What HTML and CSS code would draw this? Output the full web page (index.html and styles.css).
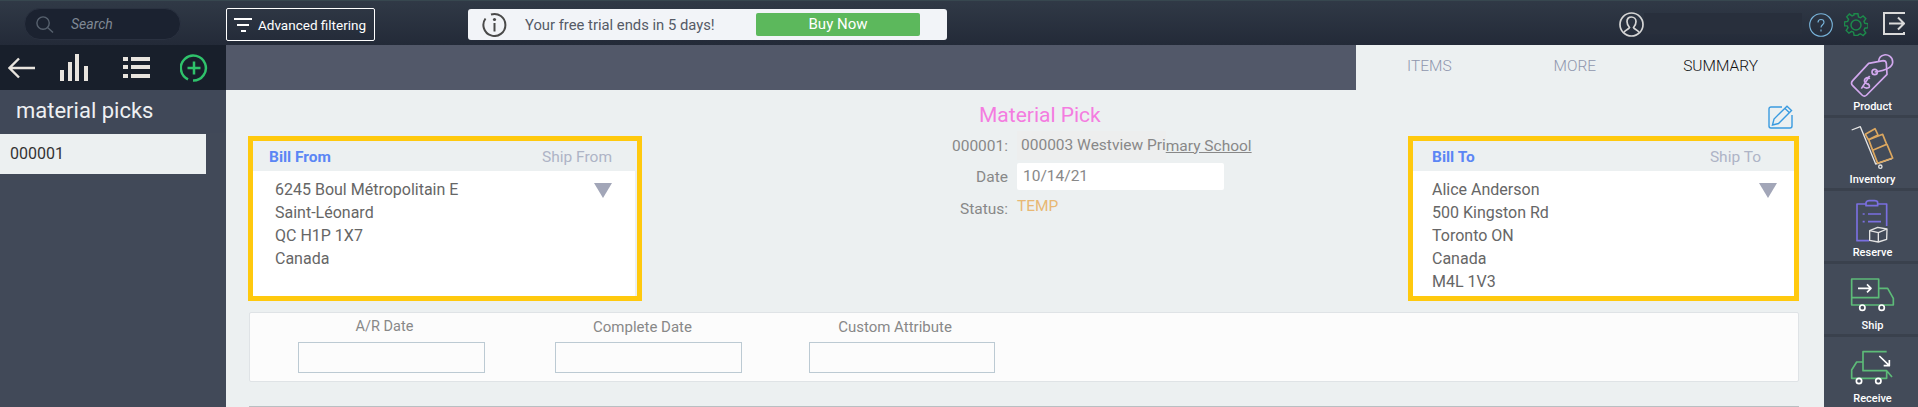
FILE: index.html
```html
<!DOCTYPE html>
<html lang="en">
  <head>
    <meta charset="UTF-8" />
    <title>Material Pick</title>
    <link rel="stylesheet" href="styles.css">
  </head>
  <body>
    <header class="topbar">
      <div class="search">
        <svg class="search-icon" viewBox="0 0 20 20"><circle cx="8.5" cy="8.5" r="6.5"/><path d="M13.5 13.5 L19 18.5"/></svg>
        <span>Search</span>
      </div>
      <button type="button" class="filter-button">
        <svg class="filter-icon" viewBox="0 0 18 16"><path d="M0 1h18v2H0zM3 7h12v2H3zM7 13h5v2H7z"/></svg>
        Advanced filtering
      </button>
      <div class="trial">
        <svg class="info-icon" viewBox="0 0 25 25"><path d="M9 2.500 A11 11 0 1 1 3.500 6.500"/><circle cx="12.500" cy="7.500" r="1.600" class="dot"/><path d="M12.500 11v8.500"/></svg>
        <span class="trial-text">Your free trial ends in 5 days!</span>
        <span class="buy-now">Buy Now</span>
      </div>
      <div class="top-right">
        <svg class="user-icon" viewBox="0 0 25 25"><circle cx="12.500" cy="12.500" r="11.500"/><path d="M5 20.500c1-3 5-3 5.500-5-2-2-2.500-4-2.500-6 0-3 2-4.500 4.500-4.500S17 7 17 9.500c0 2-.5 4-2.500 6 .5 2 4.500 2 5.500 5"/></svg>
        <div class="user-name"></div>
        <svg class="help-icon" viewBox="0 0 24 24"><circle cx="12" cy="12" r="11.300"/><path d="M9 9.500c0-2 1.300-3 3-3s3 1 3 2.800c0 2.500-3 2.500-3 5.200"/><path d="M12 16.500v2"/></svg>
        <svg class="gear-icon" viewBox="0 0 24 24"><path d="M10 1h4l.6 3.300 2 .9 2.800-1.900 2.800 2.800-1.900 2.800.9 2 3.300.6v4l-3.300.6-.9 2 1.900 2.800-2.800 2.800-2.800-1.900-2 .9L14 23.500h-4l-.6-3.300-2-.9-2.800 1.900-2.800-2.800 1.900-2.800-.9-2L0 13.500v-4l3.300-.6.9-2L2.300 4.100 5.100 1.300l2.800 1.900 2-.9z" transform="translate(.5 -.2) scale(.96)"/><circle cx="12" cy="12" r="5"/></svg>
        <svg class="logout-icon" viewBox="0 0 22 23"><path d="M21 2V1H1v21h20v-2"/><path d="M6 11.500h15M15 5.500l6 6-6 6"/></svg>
      </div>
    </header>

    <div class="app">
      <aside class="sidebar">
        <div class="toolbar">
          <svg class="tool-back" viewBox="0 0 27 22"><path d="M27 11H2M11 1.500 1.500 11l9.500 9.500"/></svg>
          <svg class="tool-bars" viewBox="0 0 28 27"><path d="M0 16h4v11H0zM8 8h4v19H8zM15 0h4v27h-4zM24 12h4v15h-4z"/></svg>
          <svg class="tool-list" viewBox="0 0 27 21"><path d="M0 0h5v4H0zM8 0h19v4H8zM0 8h5v4H0zM8 8h19v4H8zM0 17h5v4H0zM8 17h19v4H8z"/></svg>
          <svg class="tool-add" viewBox="0 0 28 28"><path d="M8 25.300A12.500 12.500 0 1 1 13 26.500"/><path d="M14 7.500v13M7.500 14h13"/></svg>
        </div>
        <h2 class="sidebar-title">material picks</h2>
        <div class="list-item">000001</div>
      </aside>

      <main class="main">
        <div class="band">
          <nav class="tabs">
            <span class="tab tab-items">ITEMS</span>
            <span class="tab tab-more">MORE</span>
            <span class="tab tab-summary">SUMMARY</span>
          </nav>
        </div>

        <div class="content">
          <div class="top-row">
            <section class="address address-from">
              <div class="address-head">
                <span class="address-active">Bill From</span>
                <span class="address-other">Ship From</span>
              </div>
              <div class="address-body">
                <div>6245 Boul Métropolitain E<br>Saint-Léonard<br>QC H1P 1X7<br>Canada</div>
                <span class="caret"></span>
              </div>
            </section>

            <section class="summary">
              <h1 class="summary-title">Material Pick</h1>
              <div class="summary-grid">
                <span class="summary-label">000001:</span>
                <span class="summary-customer"><span class="customer-shade">000003 Westview Pri</span><span class="customer-link">mary School</span></span>
                <span class="summary-label">Date</span>
                <span class="summary-date">10/14/21</span>
                <span class="summary-label">Status:</span>
                <span class="summary-status">TEMP</span>
              </div>
            </section>

            <div class="right-col">
              <svg class="edit-icon" viewBox="0 0 25 24"><path d="M14 2H3a2 2 0 0 0-2 2v17a2 2 0 0 0 2 2h19a2 2 0 0 0 2-2V10"/><path d="M4.500 20l1.500-6L19 1.200l4.500 4.300L10.500 18.500zM17 3.500l4.500 4.300"/></svg>
              <section class="address address-to">
                <div class="address-head">
                  <span class="address-active">Bill To</span>
                  <span class="address-other">Ship To</span>
                </div>
                <div class="address-body">
                  <div>Alice Anderson<br>500 Kingston Rd<br>Toronto ON<br>Canada<br>M4L 1V3</div>
                  <span class="caret"></span>
                </div>
              </section>
            </div>
          </div>

          <section class="attributes">
            <div class="attr attr-ar"><label>A/R Date</label><input type="text"></div>
            <div class="attr attr-complete"><label>Complete Date</label><input type="text"></div>
            <div class="attr attr-custom"><label>Custom Attribute</label><input type="text"></div>
          </section>
          <div class="rule"></div>
        </div>
      </main>

      <aside class="rail">
        <div class="rail-item">
          <svg class="rail-icon" viewBox="110 30 150 150">
            <path class="s-tag" d="M178 70 L222 62 Q230 62 231 70 L233 103 L172 165 Q165 172 158 165 L130 137 Q123 130 130 122 Z"/>
            <circle class="s-tag" cx="196" cy="96" r="8"/>
            <path class="s-tag" d="M196 96 C225 92 250 85 250 66 C250 50 235 42 224 45 C214 47 208 56 208 66"/>
            <path class="s-tag" d="M182 116 C172 108 160 120 168 128 C176 134 184 138 176 132 M168 128 L178 134 C186 142 172 150 160 138 M181 108 L156 146"/>
          </svg>
          <span>Product</span>
        </div>
        <div class="rail-item">
          <svg class="rail-icon" viewBox="110 255 150 150">
            <path class="s-white" d="M127 276 L153 266 L199 378 L248 362"/>
            <circle class="s-white" cx="213" cy="386" r="5"/>
            <path class="s-box" d="M168 289 L197 272 L206 291 L177 305 Z M178 305 L220 289 L232 319 L190 337 Z M190 337 L233 319 L250 360 L205 376 Z"/>
          </svg>
          <span>Inventory</span>
        </div>
        <div class="rail-item">
          <svg class="rail-icon" viewBox="110 468 150 150">
            <path class="s-clip" d="M170 492 H143 V602 H180 M205 492 H232 V558 M170 497 V488 Q172 482 180 482 H195 Q205 482 205 488 V497 Z"/>
            <path class="s-clip" d="M160 522 H166 M176 522 H215 M160 545 H166 M176 545 H215"/>
            <path class="s-white" d="M181 572 L205 562 L233 567 L232 598 L207 606 L181 601 Z M181 572 L207 578 L233 567 M207 578 V606"/>
          </svg>
          <span>Reserve</span>
        </div>
        <div class="rail-item">
          <svg class="rail-icon" viewBox="110 147 150 150">
            <path class="s-truck" d="M127 177 H208 V233 H127 Z M208 205 H235 L252 235 V255 H127 V233"/>
            <circle class="s-white-thick" cx="159" cy="263" r="8"/>
            <circle class="s-white-thick" cx="217" cy="263" r="8"/>
            <path class="s-white-thick" d="M146 205 H184 M173 193 L185 205 L173 217"/>
          </svg>
          <span>Ship</span>
        </div>
        <div class="rail-item">
          <svg class="rail-icon" viewBox="110 366 150 150">
            <path class="s-truck" d="M232 395 H161 V452 H232 L248 471 M160 426 H142 L127 450 V475 H232 V452"/>
            <circle class="s-white-thick" cx="149" cy="483" r="8"/>
            <circle class="s-white-thick" cx="207" cy="483" r="8"/>
            <path class="s-white-thick" d="M210 408 L240 437 M240 420 V437 H223"/>
          </svg>
          <span>Receive</span>
        </div>
      </aside>
    </div>
  </body>
</html>
```

FILE: styles.css
```css
* {
  box-sizing: border-box;
}
html,
body {
  margin: 0;
  height: 407px;
  overflow: hidden;
}
body {
  font-family: Roboto, "Liberation Sans", sans-serif;
  background-color: #ecf0f1;
  color: #666;
}
svg {
  display: block;
  flex: none;
  fill: none;
}

/* top bar */
.topbar {
  display: flex;
  align-items: flex-start;
  height: 45px;
  padding: 8px 13px 0 24px;
  background: linear-gradient(#303946, #232a38);
  border-top: 1px solid #37474f;
}
.search {
  display: flex;
  align-items: center;
  width: 157px;
  height: 32px;
  margin-top: -1px;
  padding-left: 10px;
  background-color: #1b2230;
  border: 1px solid #2a3140;
  border-radius: 16px;
  font-size: 14px;
  font-style: italic;
  color: #7f8894;
}
.search-icon {
  width: 19px;
  height: 19px;
  margin-right: 17px;
  stroke: #57616e;
  stroke-width: 1.500;
}
.filter-button {
  display: flex;
  align-items: center;
  width: 149px;
  height: 33px;
  margin: -1px 0 0 45px;
  padding: 0 0 0 7px;
  background: transparent;
  border: 1px solid #fff;
  border-radius: 2px;
  color: #fff;
  font: 13.500px Roboto, sans-serif;
  white-space: nowrap;
}
.filter-icon {
  width: 18px;
  height: 16px;
  margin-right: 6px;
  fill: #fff;
}
.trial {
  display: flex;
  align-items: center;
  width: 479px;
  height: 31px;
  margin: 0 0 0 93px;
  padding: 0 27px 0 14px;
  background-color: #f2f4f8;
  border-radius: 3px;
  font-size: 14.800px;
  color: #555a66;
}
.info-icon {
  width: 25px;
  height: 25px;
  stroke: #4a4a4a;
  stroke-width: 2;
}
.info-icon .dot {
  fill: #4a4a4a;
  stroke: none;
}
.trial-text {
  margin-left: 18px;
}
.buy-now {
  margin-left: auto;
  width: 164px;
  height: 23px;
  line-height: 23px;
  text-align: center;
  background-color: #5cb85c;
  border-radius: 2px;
  color: #fff;
  font-size: 15px;
}
.top-right {
  display: flex;
  align-items: flex-start;
  margin-left: auto;
}
.user-icon {
  width: 25px;
  height: 25px;
  margin-top: 3px;
  stroke: #d5d5d5;
  stroke-width: 1.700;
}
.user-name {
  width: 158px;
  height: 21px;
  margin-top: 4px;
  background-color: #282f3c;
}
.help-icon {
  width: 24px;
  height: 24px;
  margin: 4px 0 0 7px;
  stroke: #7ab6dc;
  stroke-width: 1.100;
}
.gear-icon {
  width: 24px;
  height: 24px;
  margin: 4px 0 0 11px;
  stroke: #1d8a4b;
  stroke-width: 1.500;
}
.logout-icon {
  width: 22px;
  height: 23px;
  margin: 3px 0 0 15px;
  stroke: #dadada;
  stroke-width: 2;
}

/* page frame */
.app {
  display: flex;
  height: 362px;
}

.sidebar {
  flex: none;
  width: 226px;
  background-color: #414958;
}
.toolbar {
  display: flex;
  align-items: center;
  height: 45px;
  padding-left: 8px;
  background-color: #181f2b;
}
.tool-back {
  width: 27px;
  height: 22px;
  stroke: #e8e4de;
  stroke-width: 2.400;
}
.tool-bars {
  width: 28px;
  height: 27px;
  margin-left: 25px;
  fill: #e8e4de;
}
.tool-list {
  width: 27px;
  height: 21px;
  margin-left: 35px;
  fill: #e8e4de;
}
.tool-add {
  width: 28px;
  height: 28px;
  margin-left: 30px;
  stroke: #2fc26b;
  stroke-width: 2.500;
}
.sidebar-title {
  height: 43px;
  margin: 0;
  padding-left: 16px;
  font-size: 22px;
  font-weight: 400;
  line-height: 41px;
  color: #eef0f2;
  background-color: #404858;
}
.list-item {
  width: 206px;
  height: 40px;
  margin-top: 1px;
  padding-left: 10px;
  background-color: #ecf0f1;
  font-size: 16px;
  line-height: 40px;
  color: #333;
}

.main {
  flex: 1;
  min-width: 0;
  background-color: #ecf0f1;
}
.band {
  height: 45px;
  background-color: #525869;
}
.tabs {
  display: flex;
  margin-left: 1130px;
  height: 45px;
  background-color: #ecf0f1;
  font-size: 15.500px;
  font-weight: 300;
  line-height: 43px;
}
.tab {
  color: #8f96ad;
}
.tab-items {
  margin-left: 51px;
}
.tab-more {
  margin-left: 102px;
}
.tab-summary {
  margin-left: 87px;
  color: #111;
}

.content {
  padding: 13px 25px 0 22px;
}
.top-row {
  display: flex;
  align-items: flex-start;
}

.address {
  border: 5px solid #ffc90e;
  height: 165px;
}
.address-from {
  width: 394px;
  flex: none;
  margin-top: 33px;
  padding-right: 2px;
}
.address-to {
  width: 391px;
  padding-right: 0;
}
.address-head {
  display: flex;
  justify-content: space-between;
  align-items: center;
  height: 30px;
  padding: 2px 23px 0 16px;
  font-size: 15.500px;
}
.address-to .address-head {
  padding: 2px 33px 0 19px;
}
.address-active {
  color: #5b86f5;
  font-weight: 700;
}
.address-other {
  color: #aeb4c6;
}
.address-body {
  display: flex;
  justify-content: space-between;
  height: 125px;
  padding: 7px 23px 0 22px;
  background-color: #fff;
  font-size: 16px;
  line-height: 23px;
  color: #666;
}
.address-to .address-body {
  padding: 7px 17px 0 19px;
}
.caret {
  width: 0;
  height: 0;
  margin-top: 5px;
  border-style: solid;
  border-width: 15px 9px 0;
  border-color: #a2a6b8 transparent transparent;
}

.summary {
  flex: 1;
  min-width: 0;
}
.summary-title {
  margin: 0 0 4px 337px;
  font-size: 21px;
  font-weight: 400;
  line-height: 24px;
  color: #f47ce0;
}
.summary-grid {
  display: grid;
  grid-template-columns: 366px 1fr;
  column-gap: 9px;
  grid-template-rows: 29px 33px 32px;
  font-size: 15.500px;
  color: #888;
}
.summary-label {
  text-align: right;
  align-self: center;
}
.summary-customer {
  display: flex;
  align-items: center;
}
.customer-shade {
  display: block;
  height: 29px;
  padding-left: 4px;
  line-height: 29px;
  background-color: #edeeee;
  white-space: nowrap;
}
.customer-link {
  text-decoration: underline;
  white-space: nowrap;
}
.summary-date {
  align-self: center;
  width: 207px;
  height: 27px;
  padding-left: 6px;
  line-height: 27px;
  background-color: #fff;
  border-radius: 2px;
}
.summary-status {
  color: #e8b874;
  line-height: 27px;
}

.right-col {
  flex: none;
  width: 391px;
}
.edit-icon {
  width: 25px;
  height: 24px;
  margin: 2px 0 7px 360px;
  stroke: #3a9be0;
  stroke-width: 1.400;
}

.attributes {
  display: flex;
  margin: 11px 0 0 1px;
  height: 70px;
  background-color: #fcfcfc;
  border: 1px solid #dfe3e6;
  border-radius: 2px;
}
.attr {
  display: flex;
  flex-direction: column;
  width: 187px;
  padding-top: 4px;
}
.attr label {
  height: 25px;
  line-height: 20px;
  font-size: 15px;
  color: #888;
  text-align: center;
}
.attr input {
  width: 187px;
  height: 31px;
  background: #fcfcfc;
  border: 1px solid #bccad3;
}
.attr-ar {
  margin-left: 48px;
}
.attr-ar label {
  margin-right: 14px;
  font-size: 14.500px;
}
.attr-complete {
  margin-left: 70px;
}
.attr-complete label {
  margin-right: 12px;
}
.attr-custom {
  margin-left: 67px;
  width: 186px;
}
.attr-custom input {
  width: 186px;
}
.attr-custom label {
  margin-right: 14px;
}
.rule {
  height: 1px;
  margin: 24px 0 0 1px;
  background-color: #b9bfc2;
}

/* right rail */
.rail {
  flex: none;
  width: 94px;
  background-color: #434b59;
  overflow: hidden;
}
.rail-item {
  height: 73px;
  padding-top: 5px;
  border-bottom: 3px solid #3a414d;
  text-align: center;
  font-size: 11px;
  font-weight: 500;
  line-height: 12px;
  color: #fff;
}
.rail-item span {
  display: block;
  margin: 1px 0 0 3px;
}
.rail-icon {
  width: 50px;
  height: 50px;
  margin: 0 auto;
}
.rail-icon path,
.rail-icon circle {
  fill: none;
  stroke-linejoin: round;
}
.s-tag {
  stroke: #d2a8ee;
  stroke-width: 5;
}
.s-white {
  stroke: #e4e4e4;
  stroke-width: 4;
}
.s-box {
  stroke: #dca75f;
  stroke-width: 5;
}
.s-clip {
  stroke: #7a6fe0;
  stroke-width: 5;
}
.s-truck {
  stroke: #5dbb78;
  stroke-width: 5;
}
.s-white-thick {
  stroke: #fff;
  stroke-width: 5;
}
```
